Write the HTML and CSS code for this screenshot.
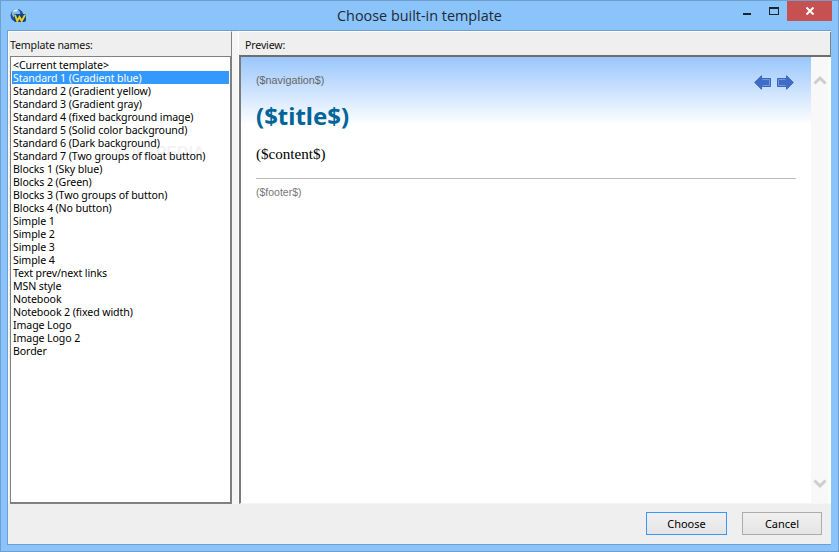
FILE: index.html
```html
<!DOCTYPE html>
<html lang="en">
<head>
<meta charset="utf-8">
<title>Choose built-in template</title>
<link rel="stylesheet" href="styles.css">
</head>
<body>
<div class="window">
  <header class="titlebar">
    <svg class="app-icon" width="16" height="16" viewBox="0 0 16 16">
      <circle cx="7" cy="7.5" r="6.5" fill="#1d4f9f"/>
      <circle cx="6" cy="5.5" r="4.2" fill="#7fbcec"/>
      <path d="M2.5 3.5 A6 6 0 0 1 8 1.3 L6.5 3.5 Z" fill="#e2f1fc"/>
      <rect x="4" y="6" width="12" height="8" rx="2" fill="#17408a"/>
      <path d="M5 7 L7.3 13 L9.5 9 L11.7 13 L15 7" fill="none" stroke="#ecd21c" stroke-width="1.9"/>
    </svg>
    <h1 class="title">Choose built-in template</h1>
    <div class="controls">
      <span class="minimize"></span>
      <span class="maximize"></span>
      <span class="close">
        <svg width="8" height="8" viewBox="0 0 8 8"><path d="M0.5 0.5 L7.5 7.5 M7.5 0.5 L0.5 7.5" stroke="#fff" stroke-width="2"/></svg>
      </span>
    </div>
  </header>
  <div class="client">
    <div class="panes">
      <section class="left">
        <div class="pane-head">Template names:</div>
        <div class="list">
          <div class="watermark">SOFTPEDIA</div>
          <div class="item">&lt;Current template&gt;</div>
          <div class="item selected">Standard 1 (Gradient blue)</div>
          <div class="item">Standard 2 (Gradient yellow)</div>
          <div class="item">Standard 3 (Gradient gray)</div>
          <div class="item">Standard 4 (fixed background image)</div>
          <div class="item">Standard 5 (Solid color background)</div>
          <div class="item">Standard 6 (Dark background)</div>
          <div class="item">Standard 7 (Two groups of float button)</div>
          <div class="item">Blocks 1 (Sky blue)</div>
          <div class="item">Blocks 2 (Green)</div>
          <div class="item">Blocks 3 (Two groups of button)</div>
          <div class="item">Blocks 4 (No button)</div>
          <div class="item">Simple 1</div>
          <div class="item">Simple 2</div>
          <div class="item">Simple 3</div>
          <div class="item">Simple 4</div>
          <div class="item">Text prev/next links</div>
          <div class="item">MSN style</div>
          <div class="item">Notebook</div>
          <div class="item">Notebook 2 (fixed width)</div>
          <div class="item">Image Logo</div>
          <div class="item">Image Logo 2</div>
          <div class="item">Border</div>
        </div>
      </section>
      <div class="splitter"></div>
      <section class="right">
        <div class="pane-head preview-head">Preview:</div>
        <div class="preview">
          <div class="doc">
            <div class="doc-top">
              <span class="nav">($navigation$)</span>
              <span class="arrows">
                <svg width="17" height="15" viewBox="0 0 17 15"><path d="M0.7 7.5 L7.5 0.7 V3.5 H16.5 V11.5 H7.5 V14.3 Z" fill="#3f6cc6" stroke="#3a66c0"/><path d="M8.5 4.5 H15.5 V10.5 H8.5" fill="none" stroke="#7397de"/></svg>
                <svg width="17" height="15" viewBox="0 0 17 15"><path d="M16.3 7.5 L9.5 0.7 V3.5 H0.5 V11.5 H9.5 V14.3 Z" fill="#3f6cc6" stroke="#3a66c0"/><path d="M8.5 4.5 H1.5 V10.5 H8.5" fill="none" stroke="#7397de"/></svg>
              </span>
            </div>
            <div class="doc-title">($title$)</div>
            <div class="doc-content">($content$)</div>
            <hr class="doc-rule">
            <div class="doc-footer">($footer$)</div>
          </div>
          <div class="scrollbar">
            <svg width="14" height="10" viewBox="0 0 14 10"><path d="M1.5 8.5 L7 3 L12.5 8.5" fill="none" stroke="#cdcdcd" stroke-width="3"/></svg>
            <svg width="14" height="10" viewBox="0 0 14 10"><path d="M1.5 1.5 L7 7 L12.5 1.5" fill="none" stroke="#cdcdcd" stroke-width="3"/></svg>
          </div>
        </div>
      </section>
    </div>
    <footer class="actions">
      <button class="btn btn-default">Choose</button>
      <button class="btn btn-cancel">Cancel</button>
    </footer>
  </div>
</div>
</body>
</html>
```

FILE: styles.css
```css
* { box-sizing: border-box; }
html, body { margin: 0; padding: 0; }
body { width: 839px; height: 552px; overflow: hidden; font-family: "Noto Sans", "DejaVu Sans", sans-serif; }
.window {
  width: 839px; height: 552px;
  background: #8ac4fb;
  border: 1px solid #6f9fcd;
  display: flex; flex-direction: column;
}
.titlebar { height: 29px; position: relative; display: flex; align-items: flex-start; flex: none; }
.app-icon { margin: 7px 0 0 9px; }
.title {
  position: absolute; left: 0; right: 0; top: 5px; margin: 0;
  text-align: center;
  font: 400 14.4px/20px "Open Sans", sans-serif;
  color: #1c2a38;
}
.controls { margin-left: auto; margin-right: 6px; display: flex; align-items: flex-start; }
.minimize { width: 8px; height: 2px; background: #1a2530; margin: 12px 18px 0 0; }
.maximize { width: 10px; height: 8px; border: 1px solid #1a2530; border-top-width: 2px; margin: 6px 8px 0 0; }
.close { width: 45px; height: 20px; background: #c75050; display: flex; align-items: center; justify-content: center; }
.client { margin: 0 7px 0 6px; height: 515px; flex: none; background: #efefef; display: flex; flex-direction: column; border: 1px solid #6f9fcd; border-right: 0; }
.panes { height: 473px; display: flex; flex: none; }
.left { width: 224px; display: flex; flex-direction: column; border: 1px solid #fff; border-right-color: #808080; border-bottom: 0; }
.splitter { width: 6px; flex: none; background: #f6f6f6; }
.right { flex: 1; display: flex; flex-direction: column; min-width: 0; border-top: 1px solid #fff; border-left: 1px solid #fff; }
.pane-head { height: 24px; flex: none; padding: 3px 0 0 1px; font-size: 10.6px; letter-spacing: -0.15px; line-height: 21px; color: #111; }
.preview-head { padding-left: 6px; border-bottom: 2px solid #6e6e6e; height: 25px; border-right: 1px solid #808080; }
.list {
  flex: 1; position: relative; background: #fff; overflow: hidden;
  border: 1px solid #808080; border-bottom-width: 2px; padding: 1px 1px 0 1px; margin-left: 1px;
  font-size: 10.6px; letter-spacing: -0.1px; line-height: 15px; color: #000;
}
.item { position: relative; height: 13px; padding-left: 1px; white-space: nowrap; }
.item.selected { background: #3399ff; color: #fff; }
.watermark {
  position: absolute; left: 102px; top: 84px;
  font: 700 16px/24px "Liberation Sans", sans-serif; letter-spacing: 0; color: #f3f3f3;
}
.preview { flex: 1; display: flex; background: #fff; border-left: 2px solid #7a7a7a; border-bottom: 1px solid #f6f6f6; min-height: 0; padding-right: 3px; }
.doc {
  flex: 1; min-width: 0; padding: 15px 15px 0 15px;
  background: linear-gradient(#99c6fd, #fff 68px);
}
.doc-top { display: flex; justify-content: space-between; align-items: flex-start; height: 29px; }
.nav { font: 10.8px/16px "Liberation Sans", sans-serif; color: #666; }
.arrows { display: flex; gap: 6px; margin: 3px 2px 0 0; }
.doc-title { font: 700 24px/30px "Noto Sans", sans-serif; color: #006699; }
.doc-content { margin-top: 14px; font: 15.1px/18px "Liberation Serif", serif; color: #000; }
.doc-rule { margin: 15px 0 0; border: 0; border-top: 1px solid #bbb; }
.doc-footer { margin-top: 7px; font: 10.5px/13px "Liberation Sans", sans-serif; color: #777; }
.scrollbar {
  width: 17px; flex: none; background: #f8f8f8; display: flex; flex-direction: column;
  justify-content: space-between; align-items: center; padding: 18px 0 14px;
}
.actions { flex: 1; display: flex; justify-content: flex-end; align-items: flex-start; gap: 15px; padding: 8px 9px 0 0; }
.btn {
  height: 23px; padding: 0;
  background: linear-gradient(#f0f0f0, #e5e5e5);
  border: 1px solid #acacac; color: #000;
  font: 11px "Noto Sans", sans-serif;
}
.btn-default { width: 81px; border-color: #3399ff; }
.btn-cancel { width: 80px; }
```
